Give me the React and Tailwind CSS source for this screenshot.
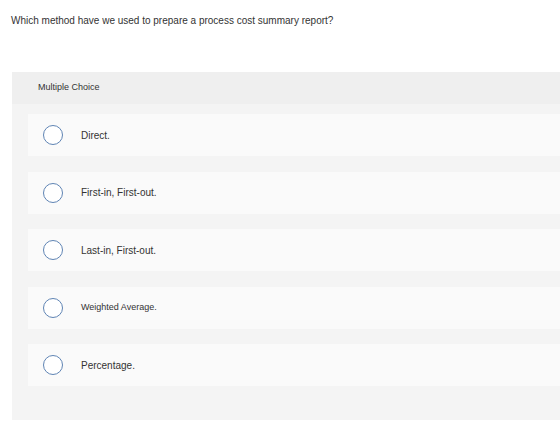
import React from "react";

const options = [
  { label: "Direct.", size: "text-[10px]" },
  { label: "First-in, First-out.", size: "text-[10px]" },
  { label: "Last-in, First-out.", size: "text-[10px]" },
  { label: "Weighted Average.", size: "text-[9px]" },
  { label: "Percentage.", size: "text-[10px]" },
];

function Option({ label, size }) {
  return (
    <div className="flex h-[42px] items-center bg-[#fafafa] pl-[15px]">
      <span className="h-[20px] w-[20px] shrink-0 rounded-full border-[1.5px] border-[#5f84b4] bg-white" />
      <span className={`ml-[18px] text-[#333] ${size}`}>{label}</span>
    </div>
  );
}

export default function App() {
  return (
    <div className="h-[440px] w-[560px] overflow-hidden bg-white font-['Liberation_Sans',Arial,sans-serif]">
      <p className="px-[11px] pt-[14px] text-[10px] leading-[14px] text-[#333]">
        Which method have we used to prepare a process cost summary report?
      </p>
      <div className="ml-[12px] mt-[44px] w-[560px] bg-[#f4f4f4] pb-[34px]">
        <div className="flex h-[32px] items-center bg-[#efefef] pl-[26px] text-[9px] text-[#333]">
          Multiple Choice
        </div>
        <div className="mt-[10px] flex flex-col gap-[15.5px] pl-[16px]">
          {options.map((o) => (
            <Option key={o.label} label={o.label} size={o.size} />
          ))}
        </div>
      </div>
    </div>
  );
}
